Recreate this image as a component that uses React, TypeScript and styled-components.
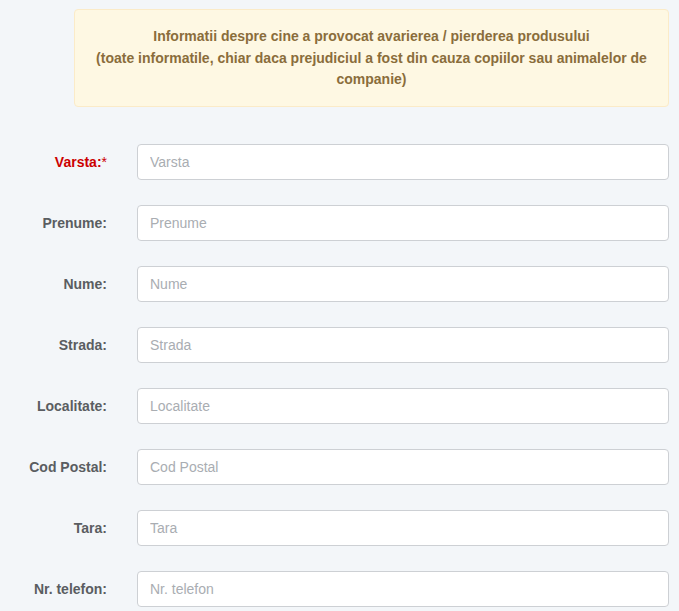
import React from "react";
import styled, { createGlobalStyle } from "styled-components";

const Global = createGlobalStyle`
  html, body { margin: 0; padding: 0; background: #f3f6f9; }
  body { font-family: "Liberation Sans", Arial, sans-serif; }
  * { box-sizing: border-box; }
`;

const Page = styled.div`
  padding: 9px 10px 0 74px;
  width: 679px;
`;

const Notice = styled.div`
  background: #fef8e3;
  border: 1px solid #fbebc8;
  border-radius: 4px;
  color: #8a6d3b;
  font-weight: bold;
  font-size: 14px;
  line-height: 21.5px;
  text-align: center;
  padding: 16px 14px 15px;
  margin-bottom: 37px;
`;

const Form = styled.div`
  display: grid;
  grid-template-columns: 107px 1fr;
  column-gap: 30px;
  row-gap: 25px;
  margin-left: -74px;
`;

const Label = styled.label<{ $required?: boolean }>`
  text-align: right;
  font-weight: bold;
  font-size: 14px;
  color: ${(p) => (p.$required ? "#cc0000" : "#5a5d61")};
  align-self: center;
  padding-top: 1px;
`;

const Star = styled.span`
  font-weight: normal;
  color: #cc0000;
`;

const Input = styled.input`
  height: 36px;
  width: 100%;
  border: 1px solid #cdd0d4;
  border-radius: 4px;
  background: #fff;
  padding: 0 12px;
  font-family: "Liberation Sans", Arial, sans-serif;
  font-size: 14px;
  color: #555;
  &::placeholder { color: #a9adb2; }
  outline: none;
`;

const fields = [
  { label: "Varsta:", required: true },
  { label: "Prenume:" },
  { label: "Nume:" },
  { label: "Strada:" },
  { label: "Localitate:" },
  { label: "Cod Postal:" },
  { label: "Tara:" },
  { label: "Nr. telefon:" },
];

export default function App() {
  return (
    <Page>
      <Global />
      <Notice>
        Informatii despre cine a provocat avarierea / pierderea produsului
        <br />
        (toate informatile, chiar daca prejudiciul a fost din cauza copiilor sau animalelor de companie)
      </Notice>
      <Form>
        {fields.map((f) => (
          <React.Fragment key={f.label}>
            <Label $required={f.required}>
              {f.label}
              {f.required && <Star>*</Star>}
            </Label>
            <Input placeholder={f.label.replace(":", "")} />
          </React.Fragment>
        ))}
      </Form>
    </Page>
  );
}
